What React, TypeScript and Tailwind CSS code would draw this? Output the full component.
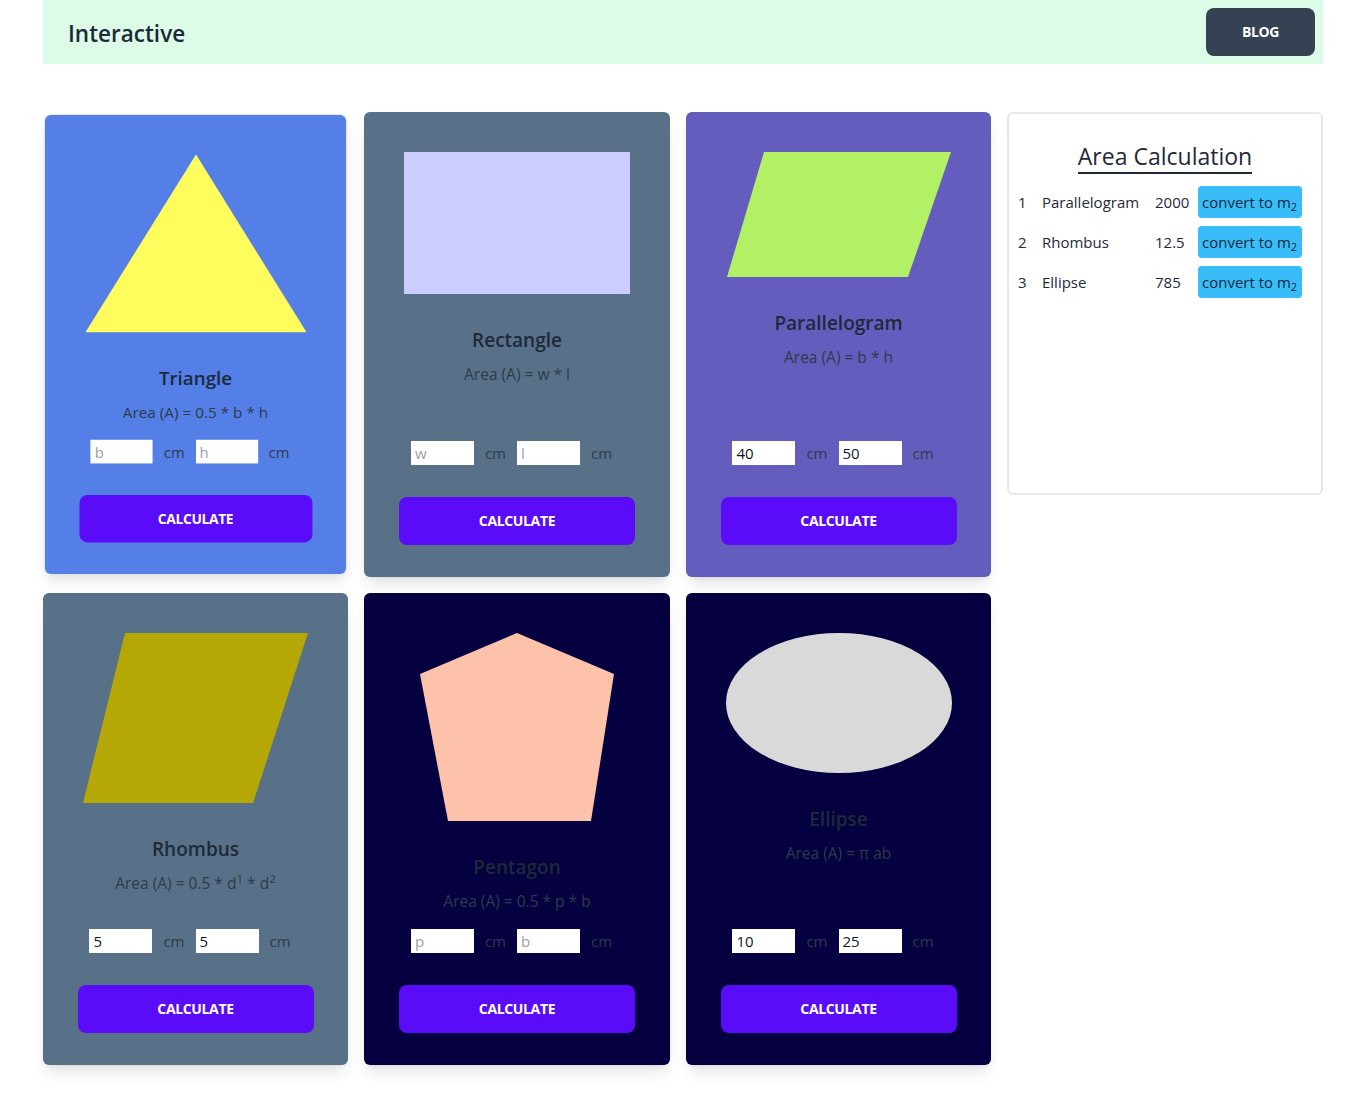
import React from 'react';

type Shape = 'triangle' | 'rectangle' | 'parallelogram' | 'rhombus' | 'pentagon' | 'ellipse';

interface CardProps {
  shape: Shape;
  title: string;
  formula: React.ReactNode;
  bg: string;
  inputs: [string, string];
  values?: [string, string];
  className?: string;
}

const ShapeArt: React.FC<{ shape: Shape }> = ({ shape }) => {
  switch (shape) {
    case 'triangle':
      return (
        <svg width="224" height="181" viewBox="0 0 224 181">
          <polygon points="112,0 224,180 0,180" fill="#fefd5d" />
        </svg>
      );
    case 'rectangle':
      return <div className="w-[226px] h-[142px] bg-[#ccccff]" />;
    case 'parallelogram':
      return (
        <svg width="224" height="125" viewBox="0 0 224 125">
          <polygon points="37,0 224,0 181,125 0,125" fill="#b2f066" />
        </svg>
      );
    case 'rhombus':
      return (
        <svg width="225" height="170" viewBox="0 0 225 170">
          <polygon points="42,0 225,0 170,170 0,170" fill="#b5a806" />
        </svg>
      );
    case 'pentagon':
      return (
        <svg width="194" height="188" viewBox="0 0 194 188">
          <polygon points="97,0 194,41 171,188 28,188 0,41" fill="#fec2ab" />
        </svg>
      );
    case 'ellipse':
      return (
        <svg width="226" height="140" viewBox="0 0 226 140">
          <ellipse cx="113" cy="70" rx="113" ry="70" fill="#d9d9d9" />
        </svg>
      );
  }
};

const ShapeCard: React.FC<CardProps> = ({ shape, title, formula, bg, inputs, values, className }) => (
  <div className={`flex flex-col items-center pt-10 pb-8 rounded-md shadow-lg ${bg} ${className ?? ''}`}>
    <ShapeArt shape={shape} />
    <h2 className="mt-8 text-[19px] leading-7 font-semibold text-gray-800">{title}</h2>
    <p className="mt-2 text-[15.5px] leading-6 text-[#2f3a4a]">{formula}</p>
    <div className="mt-auto pt-4 flex items-center">
      {inputs.map((ph, i) => (
        <div key={i} className="flex items-center">
          <input
            className="w-[63px] h-6 bg-white pl-1 text-[15px] text-gray-900 placeholder:text-gray-400 outline-none"
            placeholder={ph}
            defaultValue={values ? values[i] : undefined}
          />
          <span className="mx-[11px] text-[15px] text-[#2f3a4a]">cm</span>
        </div>
      ))}
    </div>
    <button className="mt-8 w-[236px] h-12 rounded-lg bg-[#5a0cf8] text-white text-sm font-bold uppercase tracking-tight">
      Calculate
    </button>
  </div>
);

const results = [
  { id: 1, name: 'Parallelogram', value: '2000' },
  { id: 2, name: 'Rhombus', value: '12.5' },
  { id: 3, name: 'Ellipse', value: '785' },
];

export default function App() {
  return (
    <div className="min-h-screen bg-white font-['Open_Sans',sans-serif] pb-12">
      <div className="ml-[43px] w-[1280px]">
        {/* Header */}
        <header className="h-16 bg-[#dcfce7] flex items-center justify-between pl-[25px] pr-2">
          <h1 className="pt-1 text-[22.5px] font-semibold text-gray-800">Interactive</h1>
          <button className="w-[109px] h-12 rounded-lg bg-gray-700 text-white text-sm font-bold tracking-tight">BLOG</button>
        </header>

        {/* Cards */}
        <main className="mt-12 grid grid-cols-[305px_306px_305px_316px] gap-4 items-stretch">
          <ShapeCard
            shape="triangle"
            title="Triangle"
            formula="Area (A) = 0.5 * b * h"
            bg="bg-[#537fe7]"
            inputs={['b', 'h']}
            className="scale-[0.987] ring-1 ring-gray-200"
          />
          <ShapeCard
            shape="rectangle"
            title="Rectangle"
            formula="Area (A) = w * l"
            bg="bg-[#587189]"
            inputs={['w', 'l']}
          />
          <ShapeCard
            shape="parallelogram"
            title="Parallelogram"
            formula="Area (A) = b * h"
            bg="bg-[#655dbd]"
            inputs={['b', 'h']}
            values={['40', '50']}
          />

          {/* Results panel */}
          <aside className="self-start h-[383px] border-2 border-gray-200 rounded-md bg-white pt-[26px] px-[9px] flex flex-col items-center">
            <h3 className="text-[23px] leading-8 text-gray-800 border-b-2 border-gray-800">Area Calculation</h3>
            <div className="mt-3 w-full flex flex-col gap-2">
              {results.map((r) => (
                <div key={r.id} className="grid grid-cols-[24px_113px_43px_auto] items-center text-[15px] text-gray-800">
                  <span>{r.id}</span>
                  <span>{r.name}</span>
                  <span>{r.value}</span>
                  <button className="w-[104px] h-8 rounded bg-[#38bdf8] text-[15px] text-gray-800 text-left pl-1">
                    convert to m<sub>2</sub>
                  </button>
                </div>
              ))}
            </div>
          </aside>

          <ShapeCard
            shape="rhombus"
            title="Rhombus"
            formula={<>Area (A) = 0.5 * d<sup>1</sup> * d<sup>2</sup></>}
            bg="bg-[#587189]"
            inputs={['', '']}
            values={['5', '5']}
          />
          <ShapeCard
            shape="pentagon"
            title="Pentagon"
            formula="Area (A) = 0.5 * p * b"
            bg="bg-[#05003f]"
            inputs={['p', 'b']}
          />
          <ShapeCard
            shape="ellipse"
            title="Ellipse"
            formula="Area (A) = π ab"
            bg="bg-[#05003f]"
            inputs={['', '']}
            values={['10', '25']}
          />
        </main>
      </div>
    </div>
  );
}
